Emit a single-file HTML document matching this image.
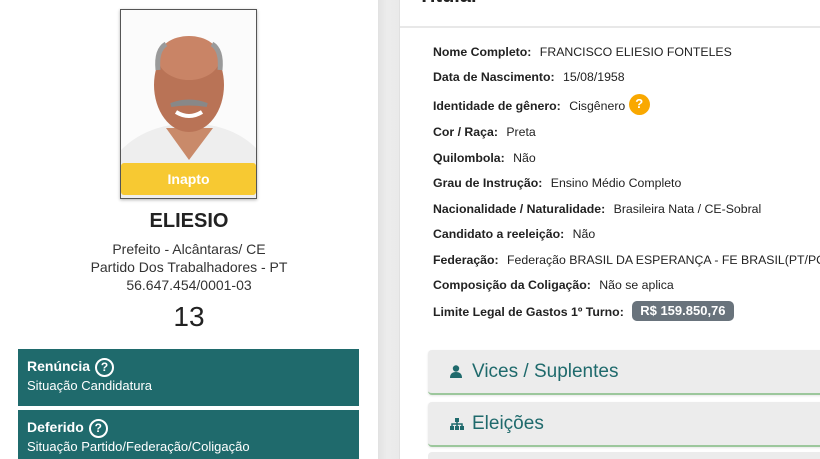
<!DOCTYPE html>
<html><head><meta charset="utf-8"><style>
*{margin:0;padding:0;box-sizing:border-box}
html,body{width:820px;height:459px;overflow:hidden}
body{background:#fff;font-family:"Liberation Sans",Roboto,sans-serif;color:#333;position:relative}
.abs{position:absolute}
.strip{left:378px;top:0;width:22px;height:459px;background:linear-gradient(90deg,#e2e2e2,#ececec 40%,#eaeaea)}
.card{left:399px;top:0;width:421px;height:459px;background:#fff;border-left:1px solid #e0e0e0}
.hdr{left:400px;top:0;width:420px;height:28px;border-bottom:2px solid #e8e8e8}
.t{left:418px;top:-15px;font-size:20px;font-weight:bold;color:#222}
.row{position:absolute;left:433px;font-size:12.3px;line-height:16px;height:16px;color:#222;white-space:nowrap}
.row b{font-weight:600;color:#222;margin-right:5px}
.photo{left:120px;top:9px;width:137px;height:190px;border:1px solid #555;box-shadow:0 1px 3px rgba(0,0,0,.3);background:#fff;overflow:hidden}
.ban{left:121px;top:163px;width:135px;height:32px;background:#f7c932;color:#fff;font-weight:bold;font-size:14px;text-align:center;line-height:32px;border-radius:3px}
.ctr{left:0;width:378px;text-align:center;color:#333}
.box{left:18px;width:341px;background:#1f6a6c;color:#fff;padding:9px 9px}
.box b{font-size:14px;font-weight:bold}
.box span{font-size:13px;display:block;margin-top:1px}
.q{display:inline-block;width:19px;height:19px;border:2px solid #fff;border-radius:50%;font-size:12px;text-align:center;line-height:15px;font-weight:bold;vertical-align:0;margin-left:5px;font-style:normal}
.acc{left:428px;width:400px;height:45px;background:#ececec;border-bottom:2px solid #9cc79c;border-radius:4px 0 0 4px;color:#1f6a6c;font-size:19px;padding-left:44px;line-height:43px;box-shadow:0 1px 2px rgba(0,0,0,.1)}
</style></head><body>
<div class="abs strip"></div>
<div class="abs card"></div>
<div class="abs hdr"></div>
<div class="abs t">Titular</div>

<div class="abs photo">
<svg width="137" height="190" viewBox="0 0 137 190">
<rect width="137" height="190" fill="#fbfbfb"/>
<path d="M0 190 L0 140 Q20 120 50 115 L88 115 Q118 120 137 140 L137 190Z" fill="#eeeeee"/>
<path d="M45 118 L68 150 L92 118 Z" fill="#c98a6a"/>
<ellipse cx="68" cy="75" rx="35" ry="47" fill="#b97356"/>
<ellipse cx="68" cy="48" rx="31" ry="22" fill="#c98466"/>
<path d="M37 60 Q35 40 45 34" stroke="#9a9a9a" stroke-width="5" fill="none"/>
<path d="M99 60 Q101 40 91 34" stroke="#9a9a9a" stroke-width="5" fill="none"/>
<path d="M50 95 Q68 88 86 95 Q68 92 50 95Z" fill="#777" stroke="#888" stroke-width="4"/>
<path d="M55 102 Q68 110 81 102" stroke="#fff" stroke-width="4" fill="none"/>
</svg>
</div>
<div class="abs ban">Inapto</div>

<div class="abs ctr" style="top:210px;font-size:20px;font-weight:bold;color:#222">ELIESIO</div>
<div class="abs ctr" style="top:240px;font-size:14px;line-height:18px">Prefeito - Alcântaras/ CE<br>Partido Dos Trabalhadores - PT<br>56.647.454/0001-03</div>
<div class="abs ctr" style="top:301px;font-size:28px;color:#222">13</div>

<div class="abs box" style="top:349px;height:57px"><b>Renúncia</b><i class="q">?</i><span>Situação Candidatura</span></div>
<div class="abs box" style="top:410px;height:60px"><b>Deferido</b><i class="q">?</i><span>Situação Partido/Federação/Coligação</span></div>

<div class="row" style="top:44px"><b>Nome Completo:</b> FRANCISCO ELIESIO FONTELES</div>
<div class="row" style="top:69px"><b>Data de Nascimento:</b> 15/08/1958</div>
<div class="row" style="top:98px"><b>Identidade de gênero:</b> Cisgênero <span style="display:inline-block;width:21px;height:21px;border-radius:50%;background:#f9a800;color:#fff;text-align:center;font-weight:bold;line-height:20px;font-size:13px;vertical-align:middle;margin-top:-5px">?</span></div>
<div class="row" style="top:124px"><b>Cor / Raça:</b> Preta</div>
<div class="row" style="top:150px"><b>Quilombola:</b> Não</div>
<div class="row" style="top:175px"><b>Grau de Instrução:</b> Ensino Médio Completo</div>
<div class="row" style="top:201px"><b>Nacionalidade / Naturalidade:</b> Brasileira Nata / CE-Sobral</div>
<div class="row" style="top:226px"><b>Candidato a reeleição:</b> Não</div>
<div class="row" style="top:252px"><b>Federação:</b> Federação BRASIL DA ESPERANÇA - FE BRASIL(PT/PC do B/PV)</div>
<div class="row" style="top:277px"><b>Composição da Coligação:</b> Não se aplica</div>
<div class="row" style="top:304px"><b>Limite Legal de Gastos 1º Turno:</b> <span style="display:inline-block;background:#69737c;color:#fff;font-weight:bold;border-radius:5px;padding:2px 8px;font-size:13px;line-height:16px;vertical-align:middle;margin-top:-3px">R$ 159.850,76</span></div>

<div class="abs acc" style="top:350px"><svg class="abs" style="left:22px;top:15px" width="12" height="13" viewBox="0 0 12 13"><circle cx="6" cy="3.5" r="3.2" fill="#1f6a6c"/><path d="M0 13 Q0 7 6 7 Q12 7 12 13Z" fill="#1f6a6c"/></svg>Vices / Suplentes</div>
<div class="abs acc" style="top:402px"><svg class="abs" style="left:22px;top:16px" width="14" height="12" viewBox="0 0 14 12"><rect x="5" y="0" width="4" height="4" fill="#1f6a6c"/><path d="M7 4V6M2 8V6H12V8M7 6V8" stroke="#1f6a6c" stroke-width="1.5" fill="none"/><rect x="0" y="8" width="4" height="4" fill="#1f6a6c"/><rect x="5" y="8" width="4" height="4" fill="#1f6a6c"/><rect x="10" y="8" width="4" height="4" fill="#1f6a6c"/></svg>Eleições</div>
<div class="abs" style="left:428px;top:452px;width:392px;height:7px;background:#ececec;border-radius:4px 0 0 0"></div>
</body></html>
